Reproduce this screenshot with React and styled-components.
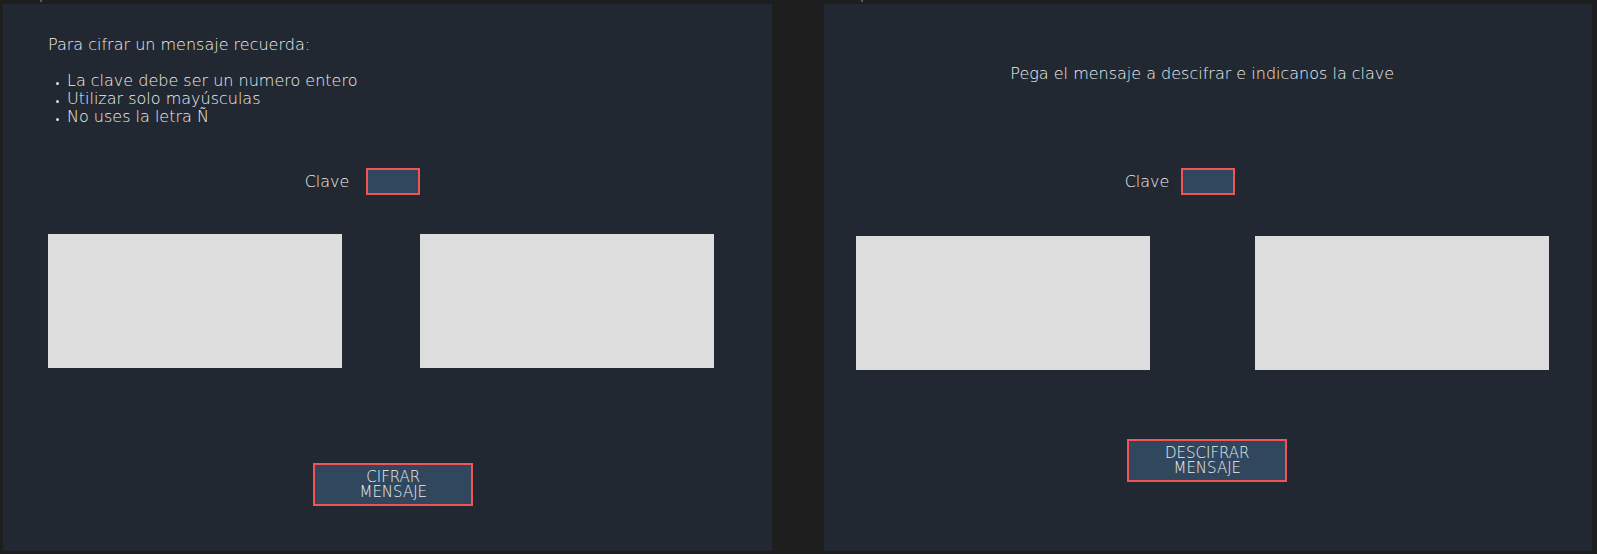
import React from "react";
import styled, { createGlobalStyle } from "styled-components";

const GlobalStyle = createGlobalStyle`
  *, *::before, *::after { box-sizing: border-box; }
  body {
    margin: 0;
    background: #1e1e1e;
    color: #eeeeee;
    font-family: "DejaVu Sans", Inter, sans-serif;
    font-weight: 200;
    font-size: 16px;
    line-height: 18px;
  }
`;

const Board = styled.main`
  display: flex;
  gap: 52px;
  min-height: 100vh;
  padding: 0 5px 3px 3px;
`;

const Frame = styled.div`
  flex: 1 1 0;
  min-width: 0;
  display: flex;
  flex-direction: column;
`;

const FrameTab = styled.div`
  height: 4px;
  padding-left: 37px;

  &::before {
    content: "";
    display: block;
    width: 2px;
    height: 2px;
    background: #5a5a5a;
  }
`;

const Panel = styled.form`
  flex: 1;
  display: flex;
  flex-direction: column;
  background: #222831;
  padding: ${(p) => p.$padding};
`;

const Message = styled.p`
  margin: 0;
  text-align: ${(p) => p.$align || "left"};
`;

const Rules = styled.ul`
  margin: 18px 0 0;
  padding-left: 19px;
  list-style: none;
`;

const Rule = styled.li`
  display: flex;
  align-items: center;

  &::before {
    content: "";
    width: 3px;
    height: 3px;
    margin: 4px 8px 0 -11px;
    border-radius: 50%;
    background: #dddddd;
  }
`;

const KeyRow = styled.div`
  display: flex;
  justify-content: center;
  align-items: center;
  gap: ${(p) => p.$gap};
  margin-top: ${(p) => p.$top};
  padding-right: ${(p) => p.$shift};
`;

const KeyLabel = styled.label`
  padding-top: 2px;
`;

const Colon = styled.span`
  font-size: 10px;
  color: #000000;
`;

const KeyInput = styled.input`
  width: 54px;
  height: 27px;
  padding: 0 6px;
  border: 2px solid #f05454;
  border-radius: 0;
  background: #30475e;
  color: inherit;
  font: inherit;
  outline: none;
`;

const Texts = styled.div`
  display: flex;
  gap: ${(p) => p.$gap};
  margin-top: ${(p) => p.$top};
`;

const TextBox = styled.textarea`
  flex: 1 1 0;
  min-width: 0;
  height: 134px;
  padding: 8px;
  border: 0;
  border-radius: 0;
  background: #dddddd;
  color: #222831;
  font: inherit;
  resize: none;
  outline: none;
`;

const Actions = styled.div`
  display: flex;
  justify-content: center;
  margin-top: ${(p) => p.$top};
  padding-left: ${(p) => p.$shift};
`;

const ActionButton = styled.button`
  width: 160px;
  height: 43px;
  padding: 0 30px;
  border: 2px solid #f05454;
  background: #30475e;
  color: inherit;
  font: inherit;
  font-size: 15px;
  line-height: 15px;
  cursor: pointer;
`;

function KeyField({ id, ...layout }) {
  return (
    <KeyRow {...layout}>
      <KeyLabel htmlFor={id}>
        Clave<Colon>:</Colon>
      </KeyLabel>
      <KeyInput id={id} type="text" inputMode="numeric" />
    </KeyRow>
  );
}

export default function App() {
  return (
    <>
      <GlobalStyle />
      <Board>
        <Frame>
          <FrameTab />
          <Panel $padding="32px 58px 45px 45px">
            <Message>Para cifrar un mensaje recuerda:</Message>
            <Rules>
              <Rule>La clave debe ser un numero entero</Rule>
              <Rule>Utilizar solo mayúsculas</Rule>
              <Rule>No uses la letra Ñ</Rule>
            </Rules>
            <KeyField id="clave-cifrar" $gap="13px" $top="42px" $shift="37px" />
            <Texts $gap="78px" $top="39px">
              <TextBox aria-label="Mensaje original" />
              <TextBox aria-label="Mensaje cifrado" />
            </Texts>
            <Actions $top="95px" $shift="25px">
              <ActionButton type="button">CIFRAR MENSAJE</ActionButton>
            </Actions>
          </Panel>
        </Frame>
        <Frame>
          <FrameTab />
          <Panel $padding="61px 43px 45px 32px">
            <Message $align="center">
              Pega el mensaje a descifrar e indicanos la clave
            </Message>
            <KeyField id="clave-descifrar" $gap="8px" $top="85px" $shift="45px" />
            <Texts $gap="105px" $top="41px">
              <TextBox aria-label="Mensaje cifrado recibido" />
              <TextBox aria-label="Mensaje descifrado" />
            </Texts>
            <Actions $top="69px" $shift="10px">
              <ActionButton type="button">DESCIFRAR MENSAJE</ActionButton>
            </Actions>
          </Panel>
        </Frame>
      </Board>
    </>
  );
}
